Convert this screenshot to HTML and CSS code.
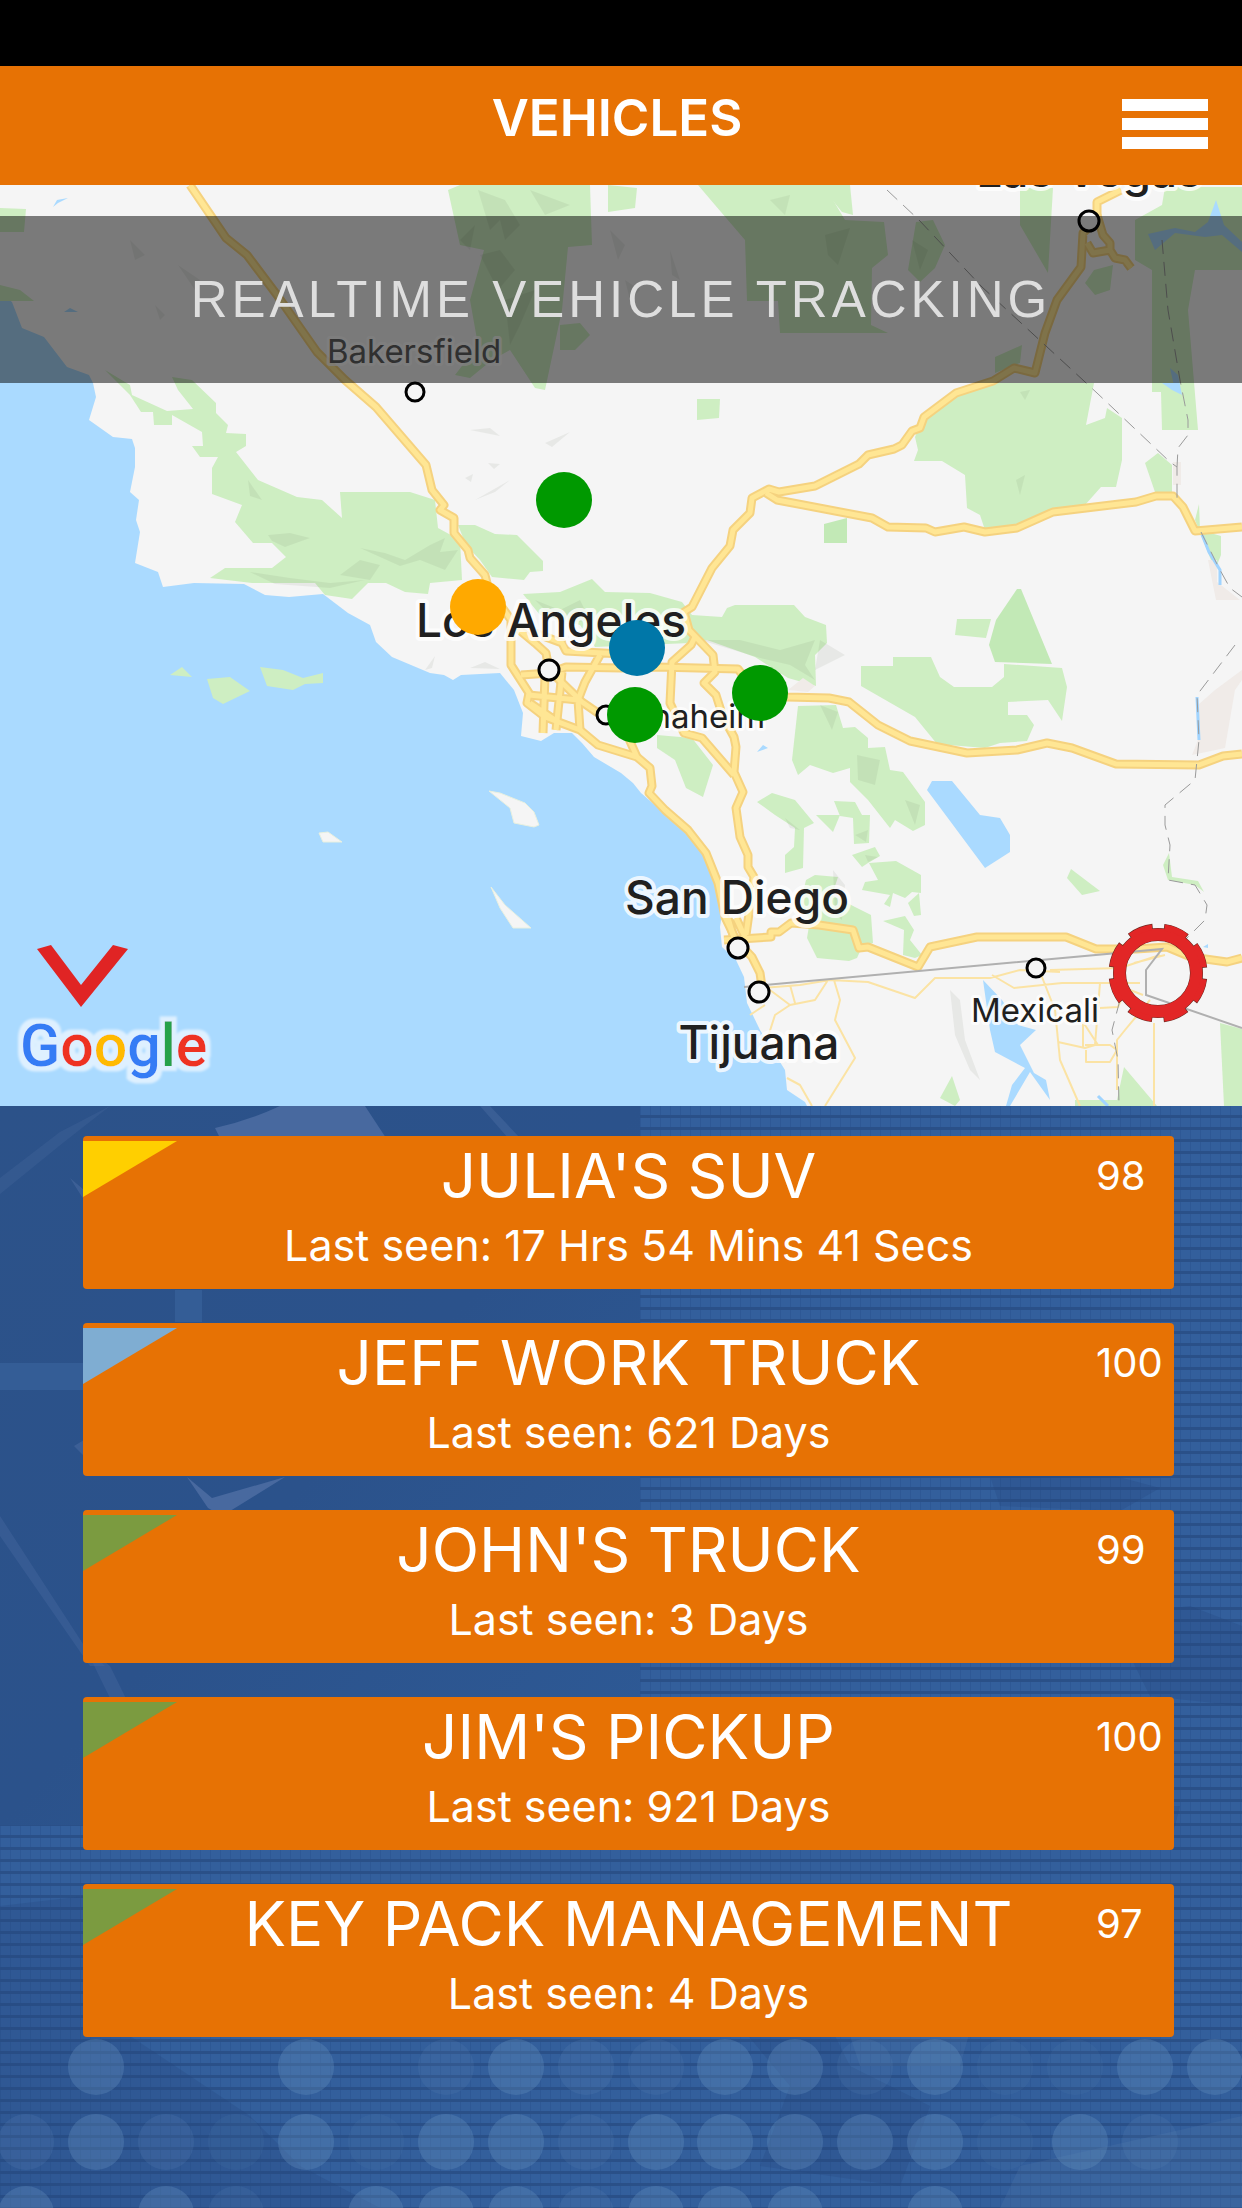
FILE: index.html
```html
<!DOCTYPE html>
<html lang="en">

<head>
  <meta charset="utf-8">
  <meta name="viewport" content="width=device-width, initial-scale=1">
  <title>Vehicles</title>
  <link rel="stylesheet" href="styles.css">
</head>

<body>
  <div class="app">
    <div class="status-bar"></div>

    <header class="header">
      <h1>VEHICLES</h1>
      <button class="menu-btn" type="button" aria-label="Menu">
        <span></span>
        <span></span>
        <span></span>
      </button>
    </header>

    <div class="map">
      <svg class="map-canvas" viewBox="0 185 1242 921">
        <defs>
          <g id="roads">
            <path d="M190 185L226 238L247 255L277 295L317 352L345 380L376 407L426 465L432 490L444 505L440 510L454 518V533L468 550L470 558L485 575L488 587L511 620V665L529 693L527 703L545 717L580 730L598 745L637 757L650 768L652 786L649 793L665 810L688 830L706 853L718 883L725 917L736 940L752 957L760 973L762 987" />
            <path d="M511 623L535 643L546 653L549 670L582 702L598 713L625 730L637 757" />
            <path d="M535 633L562 643L566 651L621 654L650 655M600 655L585 682L578 700L580 730M545 675L543 733M562 672L556 730M529 695L578 700M530 703L555 720" />
            <path d="M521 675L550 673L566 667L621 668L657 667L738 669L744 677L760 693L787 697L829 698L849 702L878 725L910 741L967 753L1017 750L1047 743L1072 748L1116 764L1199 765L1223 756L1242 754" />
            <path d="M1121 190L1097 202V220L1083 233L1081 267L1057 300L1045 333L1035 373L1014 368L993 381L956 393L924 417L920 428L912 431L902 445L894 449L868 455L859 464L815 486L779 492L769 489L752 498L750 513L733 530L730 546L712 568L692 607L684 612L689 630L713 655L715 672L704 683L716 695L723 717L734 737L736 747L734 772L743 792L736 808L740 837L748 855V867L754 877L746 935" />
            <path d="M1087 243L1093 253L1110 250L1115 258L1125 260L1131 268M1097 215L1103 235L1110 243V250" />
            <path d="M695 637L691 645L672 662L670 703L684 733L702 738L734 775" />
            <path d="M766 493L777 500L872 518L888 527L926 528L935 532L964 527L985 532L1017 528L1053 512L1136 502L1156 496H1173L1183 507L1195 531L1242 527" />
            <path d="M724 940L771 937V932H779L791 923L819 925L853 930L859 948L868 947L918 967L924 957L930 947L977 937H1066L1096 949H1136L1167 947L1191 957L1227 962L1242 958" />
            <path d="M728 918L733 935L738 948M736 918L745 937" />
          </g>
          <filter id="halo" x="-10%" y="-20%" width="120%" height="140%">
            <feMorphology in="SourceAlpha" operator="dilate" radius="5" result="wide" />
            <feGaussianBlur in="wide" stdDeviation="1" result="soft" />
            <feFlood flood-color="#def0ff" />
            <feComposite in2="soft" operator="in" result="glow" />
            <feMerge>
              <feMergeNode in="glow" />
              <feMergeNode in="SourceGraphic" />
            </feMerge>
          </filter>
        </defs>

        <!-- land and ocean -->
        <rect class="land" x="0" y="185" width="1242" height="921" />
        <path class="water" d="M0 293L12 302L22 328L44 337L67 367L89 375L93 383L96 397L89 420L113 437L132 439L135 448V467L130 492L139 500L136 520L140 532L135 563L158 572L163 587L194 583L244 584L265 595L289 597L323 594L348 613L370 625L376 642L392 657L430 673L444 675L453 680L461 675L500 673L514 690L523 713L521 736L541 741L554 733H572L582 743L594 757L621 773L633 783L641 793L663 812L686 830L704 853L714 883L723 907L720 927L722 947L736 960L744 977L747 1003L760 1030L785 1070L787 1090L805 1102L807 1106H0Z" />

        <!-- parks -->
        <g class="park">
          <path d="M105 370L130 385L132 395L167 411L193 409L178 390L172 377L192 380L216 403V413L228 425L226 433L246 434V446L236 452L258 480L297 497L322 500L342 518L340 492H410L435 500L438 528L460 540L462 580L430 583L428 594L405 592L386 583H368L352 599L325 595L315 583H252L210 578L225 568H272L286 557L272 543H253L235 522L242 505L212 494V468L218 457H200L192 446H203L202 432L172 415V425H154L153 412H141L130 395Z" />
          <path d="M458 525H475L495 534L517 535L543 561V571L530 572L524 580L492 577L480 560L466 545Z" />
          <path d="M523 594L560 592L592 579L605 592L650 593L682 602L692 615L722 617L727 608L735 605H794L805 617L826 625L827 643L815 655L816 686L788 678L755 657L707 640L690 643L595 647L580 625L540 615Z" />
          <path d="M993 383H1094L1086 425L1105 418L1107 408L1122 418V460L1116 487H1101L1085 505L1053 512L1017 528L985 530L980 515L967 508L965 475L942 461H914L918 450L915 437L924 417L956 393Z" />
          <path d="M697 399H720L719 418L697 420Z" />
          <path class="park-dark" d="M824 524L847 518V543H824Z" />
          <path d="M957 619H991L986 638L955 635Z" />
          <path class="park-dark" d="M1017 589H1021L1052 664L995 662L989 645L996 620Z" />
          <path d="M861 666H893V657H931L940 677L954 687H992L1004 677V664L1062 668L1067 687L1062 721L1048 700L1008 702V715L1027 715L1034 725L1027 741L1000 743L985 748L937 744L915 717L861 686Z" />
          <path d="M1145 463L1158 453L1172 465V492H1155Z" />
          <path d="M1195 520L1199 504L1200 530L1221 536V555L1215 570Z" />
          <path d="M798 706L836 705L843 728L855 727L868 738V748L885 747L890 770L903 772L925 802V825L913 831L895 820L890 828L868 800L850 782V768L833 773L810 765L798 775L792 760Z" />
          <path d="M657 735L692 738L713 765L703 797L686 788L675 760L657 748Z" />
          <path d="M757 802L772 793L795 800L814 823L804 828L803 868L785 873V855L794 847L795 828L775 815Z" />
          <path d="M834 801L855 802L862 815H870L869 843L854 844L853 818L840 816Z" />
          <path d="M816 815H840L833 832Z" />
          <path d="M852 855L875 847L880 856L868 863L862 867Z" />
          <path d="M869 863L896 861L921 875V893L912 892L905 898L893 893L890 907L884 904L890 895L862 890L865 882L878 880Z" />
          <path d="M908 903L919 893L921 915L914 916Z" />
          <path d="M806 880L815 875L838 877L832 895L855 907L871 915L873 943L862 947L857 958L849 961L817 958L807 938L810 920L800 905Z" />
          <path d="M883 921L905 916L914 930L910 940L922 955L915 958L903 955L904 930Z" />
          <path d="M1067 878L1071 869L1100 891L1082 895Z" />
          <path d="M1169 853L1172 877L1198 881L1204 892L1195 885L1168 880L1163 865Z" />
          <path d="M940 1098L952 1076L960 1100L955 1106Z" />
          <path d="M1220 1023L1242 1029V1106H1224Z" />
          <path d="M1075 1106V1100H1117L1124 1067L1157 1106Z" />
          <path d="M448 190L460 185H590L592 245L568 247L562 310L545 390L535 388L510 350L492 360L470 378L455 375L478 345L470 300L484 250L460 245Z" />
          <path d="M560 325L580 323L590 335L575 350H560Z" />
          <path d="M608 185L637 188L635 208L608 212Z" />
          <path d="M698 185H824L845 220L884 222L888 255L872 268L871 325L888 333H780L778 301H747L745 240L715 205Z" />
          <path d="M820 185H850L853 215L842 212Z" />
          <path d="M916 222L933 220L945 245L935 268L920 282L908 270Z" />
          <path d="M1020 188H1053L1048 273L1020 225Z" />
          <path d="M995 357L1022 345L1020 363L995 373Z" />
          <path d="M1094 270L1113 265L1110 290L1095 295L1085 283Z" />
          <path d="M0 208L26 209L24 232H0Z" />
          <path d="M0 285L20 290L34 301H0Z" />
          <path d="M1135 220L1162 205L1165 187H1242V270H1195L1188 310L1198 430H1162L1161 392H1152V270L1135 260Z" />
        </g>

        <!-- islands -->
        <path class="park" d="M170 675L182 667L192 677ZM207 679L230 677L250 691L223 704L213 698ZM260 667L283 670L303 678L323 673V683L305 684L293 690L267 686Z" />
        <path class="land island" d="M319 833L328 832L342 842H323ZM489 791L500 793L525 803L534 812L539 825L534 827L514 823L510 808ZM491 887L505 905L531 928H513L500 908Z" />

        <!-- mountain shading -->
        <g class="relief">
          <path d="M248 480L262 500L250 496ZM268 535L290 533L310 538L285 547L272 541ZM360 548L385 553L405 560L430 545L445 538L440 552L458 550L445 570L420 560L400 566ZM250 572L290 578L330 583L365 580L330 588L275 584ZM340 575L360 560L380 565L370 580Z" />
          <path d="M470 430L490 428L500 436ZM545 443L570 432L552 447ZM475 500L510 480L495 492ZM488 463L500 464L494 469ZM465 478L473 474L471 482Z" />
          <path d="M700 640L740 640L780 650L815 640L805 665L815 680L790 665L760 658ZM820 640L845 655L815 670ZM535 600L560 610L580 600L590 620L560 625Z" />
          <path d="M820 705L838 712L832 730ZM857 755L880 760L875 785L858 780ZM905 800L920 805L915 825ZM785 818L800 830L790 828ZM855 835L868 830L866 842ZM865 855L878 857L868 862Z" />
          <path d="M478 190L505 200L520 225L505 240L500 220L490 230ZM530 190L570 205L545 215ZM480 255L500 250L515 270L498 290ZM460 240L475 225L470 250ZM505 300L535 290L520 325L510 345Z" />
          <path d="M770 200L790 195L785 215ZM825 235L850 228L838 265L828 255ZM912 240L928 250L920 270ZM1016 480L1025 475L1020 495ZM1030 390L1025 400L1020 392Z" />
          <path d="M950 990L960 1000L965 1040L980 1080L970 1070L955 1035ZM833 870L845 885L842 920L835 915ZM425 670L435 656L432 668ZM470 668L485 662L500 669Z" />
          <path d="M130 240L145 255L135 260ZM155 305L165 315L160 320ZM178 265L200 280L195 290ZM610 230L625 245L618 260ZM625 280L640 290L630 300ZM670 250L680 280L672 275Z" />
        </g>

        <path class="urban" d="M1242 670L1215 690L1198 705V740L1192 755L1225 748L1235 690L1242 680Z" />
        <path class="urban" d="M1173 462H1181V485H1173ZM1208 560H1217V582L1240 600H1216ZM1165 935H1185L1190 950L1165 945Z" />
        <path class="urban" d="M788 690L803 678L815 686L808 692Z" />

        <!-- lakes and rivers -->
        <path class="water" d="M927 790L932 781H952L980 815L1000 818L1010 835V852L985 868Z" />
        <path class="water" d="M983 980L1002 1000L1018 1025L1036 1030L1020 1045L1034 1073L1046 1080L1050 1100L1030 1072L1010 1106H1006L1012 1085L1025 1068L995 1052L990 1030Z" />
        <path class="water" d="M1148 234L1175 228L1195 232L1208 222L1216 200L1224 225L1242 242V252L1222 235L1205 237L1175 233L1155 250ZM1162 383H1178L1180 394L1172 390ZM1170 368L1178 375L1182 395L1175 390ZM53 207L57 200L68 198L58 203ZM64 312L70 308L78 312ZM757 752L763 745L768 748ZM1203 947L1208 944V948Z" />
        <path class="river" d="M1201 532L1209 552L1220 570V585M1197 697L1199 740M1098 1096L1108 1106" />

        <!-- roads -->
        <path class="road-minor" d="M762 988L800 985L830 980L868 982L915 998L935 978L990 978L1020 970L1060 972M992 975L1014 988L1062 983H1140M1040 972L1055 1010L1060 1060L1080 1106M834 980L840 1000L835 1020L855 1058L825 1106M770 990L790 1005L815 1000L828 980M790 1005L775 1015L767 1040M790 985L795 1003M1050 970L1120 968L1160 955M1100 983L1095 1045L1085 1048L1058 1042M1083 1022L1098 1045M1083 1022V1048M1086 1050V1062H1110L1117 1050L1110 1045H1085M1117 1090V1040L1125 1030L1150 1000M1154 1023V1106M787 1078L800 1085L812 1106M750 1015L765 1005M1100 1008L1118 1007L1125 990M1130 990L1143 995M1134 963L1165 955" />
        <use href="#roads" class="road-edge" />
        <use href="#roads" class="road" />
        <path class="border" d="M744 987L1162 949L1146 970V995L1242 1028" />
        <path class="state-line" d="M887 190L919 220L982 287L1097 393L1170 462L1177 467V500M1162 240L1168 310L1180 380L1188 420V435L1178 448L1177 467M1201 532L1220 570L1230 588L1242 597M1235 645L1197 695L1199 740L1195 780L1165 805V825L1170 845L1168 880L1195 885L1207 905L1205 920L1180 945M1120 1000L1112 1030L1118 1060L1119 1106" />

        <!-- city names -->
        <g class="city">
          <text x="1089" y="187">Las Vegas</text>
          <text x="551" y="637">Los Angeles</text>
          <text x="737" y="914">San Diego</text>
          <text x="759" y="1059">Tijuana</text>
        </g>
        <g class="town">
          <text class="muted" x="414" y="363">Bakersfield</text>
          <text x="697" y="728">Anaheim</text>
          <text x="1035" y="1022">Mexicali</text>
        </g>
        <g class="place">
          <circle cx="1089" cy="221" r="10" />
          <circle cx="415" cy="392" r="9" />
          <circle cx="549" cy="670" r="10" />
          <circle cx="606" cy="715" r="9" />
          <circle cx="738" cy="948" r="10" />
          <circle cx="759" cy="992" r="10" />
          <circle cx="1036" cy="968" r="9" />
        </g>

        <!-- vehicle positions -->
        <circle class="pin green" cx="564" cy="500" r="28" />
        <circle class="pin orange" cx="478" cy="607" r="28" />
        <circle class="pin green" cx="760" cy="693" r="28" />
        <circle class="pin blue" cx="637" cy="648" r="28" />
        <circle class="pin green" cx="635" cy="715" r="28" />

        <text class="google" x="20" y="1066" filter="url(#halo)"><tspan class="g-blue">G</tspan><tspan class="g-red">o</tspan><tspan class="g-yellow">o</tspan><tspan class="g-blue">g</tspan><tspan class="g-green">l</tspan><tspan class="g-red">e</tspan></text>
      </svg>

      <p class="banner">REALTIME VEHICLE TRACKING</p>

      <button class="map-btn collapse-btn" type="button" aria-label="Collapse map">
        <svg viewBox="0 0 91 62">
          <path d="M0 4L14 0L44 40L76 0L91 4L44 62Z" />
        </svg>
      </button>

      <button class="map-btn settings-btn" type="button" aria-label="Settings">
        <svg viewBox="-50 -50 100 100">
          <g class="gear-edge">
            <circle r="38.5" stroke-width="13" />
            <circle r="46.5" stroke-width="6" stroke-dasharray="25 11.52" stroke-dashoffset="-5.76" />
          </g>
          <g class="gear">
            <circle r="38.5" stroke-width="12" />
            <circle r="46" stroke-width="6" stroke-dasharray="23.5 12.63" stroke-dashoffset="-6.3" />
          </g>
        </svg>
      </button>
    </div>

    <main class="vehicles">
      <svg class="backdrop" viewBox="0 0 1242 1102" preserveAspectRatio="xMidYMin slice">
        <defs>
          <pattern id="lines" width="10" height="12" patternUnits="userSpaceOnUse">
            <rect width="10" height="12" fill="#335f9c" />
            <rect width="1" height="12" fill="#2e5895" />
            <rect y="9" width="10" height="3" fill="#2a5088" />
          </pattern>
          <linearGradient id="shade" x1="0" y1="0" x2="1" y2="1">
            <stop offset="0" stop-color="#2c5289" />
            <stop offset="0.5" stop-color="#2b528b" />
            <stop offset="1" stop-color="#2e5a96" />
          </linearGradient>
        </defs>
        <rect width="1242" height="1102" fill="url(#lines)" />
        <rect width="640" height="719" fill="url(#shade)" />
        <g fill="#48699f">
          <path d="M215 22Q250 14 280 0H365L386 32H220Z" />
          <path d="M480 0H490L520 32H508Z" opacity="0.5" />
          <path d="M187 371L212 392L285 371L222 410L208 402Z" />
          <path d="M0 72L60 26L110 0L64 36L0 88Z" opacity="0.3" />
          <path d="M0 410L85 541L105 560H90L0 430Z" opacity="0.4" />
          <path d="M110 560L188 719H172L85 541Z" opacity="0.4" />
          <path d="M70 72L84 84V94ZM74 340L84 334V350Z" opacity="0.6" />
        </g>
        <path d="M175 184H202V216H175ZM0 257H84V284H0Z" fill="#3a659e" opacity="0.6" />
        <g fill="#23457c" opacity="0.25">
          <path d="M990 370L1100 366L1160 382L1120 405L1000 400Z" />
          <path d="M1110 510L1190 500L1242 520V600L1150 590Z" />
          <path d="M850 690L960 705L1180 700L1170 740L1000 740Z" />
          <path d="M0 800L85 790V900L160 950L250 1010L300 1060L380 1102H0Z" />
          <path d="M740 920L820 900L850 960L930 1000L900 1080L760 1060L790 980Z" />
        </g>
        <path d="M840 900L980 890L960 960H860ZM1020 1060L1242 1010V1102H1000Z" fill="#5c7bb0" opacity="0.2" />
        <g fill="#6d98c4" opacity="0.3">
          <circle cx="96" cy="961" r="28" />
          <circle cx="306" cy="961" r="28" />
          <circle cx="446" cy="961" r="28" opacity="0.4" />
          <circle cx="516" cy="961" r="28" />
          <circle cx="586" cy="961" r="28" opacity="0.5" />
          <circle cx="656" cy="961" r="28" opacity="0.4" />
          <circle cx="725" cy="961" r="28" />
          <circle cx="795" cy="961" r="28" />
          <circle cx="865" cy="961" r="28" opacity="0.4" />
          <circle cx="935" cy="961" r="28" />
          <circle cx="1005" cy="961" r="28" opacity="0.3" />
          <circle cx="1075" cy="961" r="28" opacity="0.3" />
          <circle cx="1145" cy="961" r="28" />
          <circle cx="1215" cy="961" r="28" />
          <circle cx="26" cy="1036" r="28" opacity="0.5" />
          <circle cx="96" cy="1036" r="28" />
          <circle cx="166" cy="1036" r="28" opacity="0.5" />
          <circle cx="236" cy="1036" r="28" opacity="0.3" />
          <circle cx="306" cy="1036" r="28" />
          <circle cx="376" cy="1036" r="28" opacity="0.3" />
          <circle cx="446" cy="1036" r="28" />
          <circle cx="516" cy="1036" r="28" />
          <circle cx="586" cy="1036" r="28" opacity="0.4" />
          <circle cx="656" cy="1036" r="28" />
          <circle cx="725" cy="1036" r="28" />
          <circle cx="795" cy="1036" r="28" />
          <circle cx="865" cy="1036" r="28" />
          <circle cx="935" cy="1036" r="28" />
          <circle cx="1005" cy="1036" r="28" opacity="0.3" />
          <circle cx="1080" cy="1036" r="28" />
          <circle cx="1150" cy="1036" r="28" opacity="0.4" />
          <circle cx="26" cy="1108" r="28" />
          <circle cx="166" cy="1108" r="28" />
          <circle cx="236" cy="1108" r="28" opacity="0.4" />
          <circle cx="376" cy="1108" r="28" />
          <circle cx="446" cy="1108" r="28" />
          <circle cx="516" cy="1108" r="28" />
          <circle cx="586" cy="1108" r="28" opacity="0.5" />
          <circle cx="656" cy="1108" r="28" />
          <circle cx="725" cy="1108" r="28" />
          <circle cx="795" cy="1108" r="28" />
          <circle cx="935" cy="1108" r="28" />
        </g>
      </svg>

      <ul class="vehicle-list">
        <li>
          <button class="vehicle" type="button">
            <span class="flag yellow"></span>
            <span class="name">JULIA'S SUV</span>
            <span class="score">98</span>
            <span class="seen">Last seen: 17 Hrs 54 Mins 41 Secs</span>
          </button>
        </li>
        <li>
          <button class="vehicle" type="button">
            <span class="flag sky"></span>
            <span class="name">JEFF WORK TRUCK</span>
            <span class="score">100</span>
            <span class="seen">Last seen: 621 Days</span>
          </button>
        </li>
        <li>
          <button class="vehicle" type="button">
            <span class="flag olive"></span>
            <span class="name">JOHN'S TRUCK</span>
            <span class="score">99</span>
            <span class="seen">Last seen: 3 Days</span>
          </button>
        </li>
        <li>
          <button class="vehicle" type="button">
            <span class="flag olive"></span>
            <span class="name">JIM'S PICKUP</span>
            <span class="score">100</span>
            <span class="seen">Last seen: 921 Days</span>
          </button>
        </li>
        <li>
          <button class="vehicle" type="button">
            <span class="flag olive"></span>
            <span class="name">KEY PACK MANAGEMENT</span>
            <span class="score">97</span>
            <span class="seen">Last seen: 4 Days</span>
          </button>
        </li>
      </ul>
    </main>
  </div>
</body>

</html>
```
FILE: styles.css
```css
* {
box-sizing: border-box;
}

body {
margin: 0;
font-family: Inter, "Liberation Sans", sans-serif;
background-color: #2f5a98;
}

button {
border: none;
padding: 0;
background: none;
font: inherit;
color: inherit;
cursor: pointer;
}

.app {
display: flex;
flex-direction: column;
min-height: 100vh;
}

.status-bar {
height: 66px;
background-color: #000;
}

.header {
display: grid;
grid-template-columns: 112px 1fr 120px;
align-items: center;
height: 119px;
padding-bottom: 4px;
background-color: #e77204;
color: #fff;
}

.header h1 {
grid-column: 2;
margin: 0;
padding-bottom: 12px;
text-align: center;
font-size: 51px;
line-height: 60px;
font-weight: 600;
}

.menu-btn {
display: flex;
flex-direction: column;
gap: 7px;
width: 86px;
}

.menu-btn span {
height: 12px;
background-color: #fff;
}

/* map */
.map {
position: relative;
}

.map-canvas {
display: block;
width: 100%;
}

.land {
fill: #f5f5f5;
}

.water {
fill: #aadaff;
}

.park {
fill: #ceeec2;
}

.park-dark {
fill: #c2e9b6;
}

.island {
stroke: #e8f0e0;
}

.relief {
fill: #505a46;
opacity: 0.08;
}

.urban {
fill: #f0ebe8;
}

.river {
fill: none;
stroke: #a0d4ff;
stroke-width: 3;
}

.road-edge,
.road,
.road-minor {
fill: none;
stroke-linejoin: round;
}

.road-edge {
stroke: #f5d27f;
stroke-width: 9;
}

.road {
stroke: #ffe694;
stroke-width: 5;
}

.road-minor {
stroke: #fbe3a4;
stroke-width: 2;
}

.border {
fill: none;
stroke: #b0b0b0;
stroke-width: 2;
}

.state-line {
fill: none;
stroke: #9a9a9a;
stroke-width: 1;
stroke-dasharray: 14 8;
}

.city,
.town {
text-anchor: middle;
fill: #202020;
stroke: #fff;
stroke-opacity: 0.8;
stroke-linejoin: round;
paint-order: stroke;
}

.city {
font-size: 46px;
font-weight: 500;
stroke-width: 8;
}

.town {
font-size: 33px;
stroke-width: 6;
}

.town .muted {
fill: #606060;
}

.place {
fill: #f5f5f5;
stroke: #000;
stroke-width: 3;
}

.pin.green {
fill: #009900;
}

.pin.orange {
fill: #ffa900;
}

.pin.blue {
fill: #0077a8;
}

.google {
font-family: Roboto, sans-serif;
font-size: 59px;
font-weight: 500;
}

.g-blue {
fill: #367cf5;
}

.g-red {
fill: #ee3224;
}

.g-yellow {
fill: #ffba00;
}

.g-green {
fill: #26a248;
}

.banner {
position: absolute;
top: 31px;
left: 0;
right: 0;
margin: 0;
background-color: rgba(0, 0, 0, 0.5);
color: #dedede;
text-align: center;
font-family: "Liberation Sans", Arial, sans-serif;
font-size: 51px;
line-height: 167px;
letter-spacing: 4px;
}

.map-btn {
position: absolute;
}

.map-btn svg {
display: block;
width: 100%;
}

.collapse-btn {
left: 37px;
bottom: 99px;
width: 91px;
fill: #e02424;
}

.settings-btn {
right: 34px;
bottom: 83px;
width: 100px;
}

.gear-edge,
.gear {
fill: none;
}

.gear-edge {
stroke: #6b2a22;
}

.gear {
stroke: #e22626;
}

/* vehicle cards */
.vehicles {
position: relative;
flex: 1;
padding: 30px 68px 30px 83px;
overflow: hidden;
}

.backdrop {
position: absolute;
top: 0;
left: 0;
width: 100%;
height: 100%;
}

.vehicle-list {
position: relative;
display: flex;
flex-direction: column;
gap: 34px;
margin: 0;
padding: 0;
list-style: none;
}

.vehicle {
display: grid;
grid-template-columns: 78px 1fr 78px;
grid-template-rows: 80px 58px;
align-content: start;
width: 100%;
height: 153px;
border-radius: 4px;
background-color: #e77204;
color: #fff;
text-align: center;
}

.flag {
width: 94px;
height: 56px;
margin-top: 5px;
clip-path: polygon(0 0, 100% 0, 0 100%);
}

.flag.yellow {
background-color: #ffcf00;
}

.flag.sky {
background-color: #7fadd2;
}

.flag.olive {
background-color: #7b9b40;
}

.name {
font-size: 62px;
line-height: 80px;
white-space: nowrap;
}

.score {
font-size: 40px;
line-height: 80px;
text-align: left;
}

.seen {
grid-column: 2;
font-size: 43px;
line-height: 58px;
}
```
